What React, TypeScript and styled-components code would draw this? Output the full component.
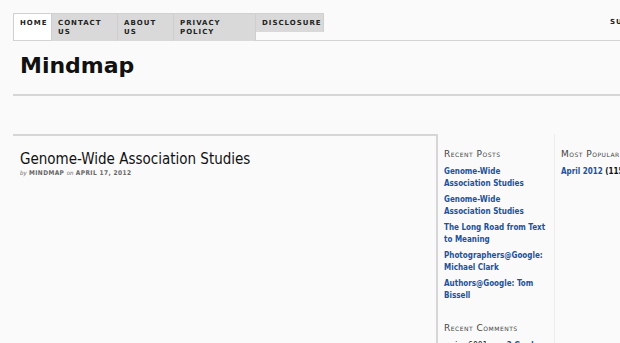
import React from 'react';
import styled, { createGlobalStyle } from 'styled-components';

const GlobalStyle = createGlobalStyle`
	html, body {
		margin: 0;
		padding: 0;
		background: #fafafa;
		overflow: hidden;
	}
	body {
		font-family: 'DejaVu Sans', 'Liberation Sans', sans-serif;
		color: #111;
	}
`;

const Page = styled.div`
	width: 1000px;
	padding: 13px 0 0 13px;
`;

const NavBar = styled.div`
	display: flex;
	align-items: flex-start;
	height: 27px;
	border-bottom: 1px solid #d4d4d4;
`;

const NavList = styled.ul`
	display: flex;
	align-items: flex-start;
	margin: 0;
	padding: 0;
	list-style-type: none;
	border-top: 1px solid #d0d0d0;
	border-left: 1px solid #d0d0d0;
`;

const NavItem = styled.li<{ $w: number; $active?: boolean }>`
	box-sizing: border-box;
	width: ${(p) => p.$w}px;
	height: ${(p) => (p.$active ? '26px' : 'auto')};
	padding: 5px 6px 4px;
	background: ${(p) => (p.$active ? '#fff' : '#d9d9d9')};
	border-right: 1px solid #cfcfcf;

	font-size: 7px;
	font-weight: bold;
	line-height: 9px;
	letter-spacing: 1px;
	text-transform: uppercase;
	color: #222;
`;

const Subscribe = styled.div`
	margin-left: 286px;
	padding-top: 5px;
	font-size: 7px;
	font-weight: bold;
	line-height: 9px;
	letter-spacing: 1px;
	color: #222;
`;

const Masthead = styled.div`
	height: 55px;
	border-bottom: 2px solid #d6d6d6;
	box-sizing: border-box;
	padding: 11px 0 0 7px;
`;

const SiteTitle = styled.h1`
	margin: 0;
	font-size: 22px;
	line-height: 28px;
	font-weight: bold;
	color: #111;
`;

const Main = styled.div`
	display: flex;
	margin-top: 38px;
`;

const Content = styled.div`
	width: 424px;
	box-sizing: border-box;
	min-height: 300px;
	padding: 13px 0 0 7px;
	border-top: 2px solid #d6d6d6;
	border-right: 1px solid #d6d6d6;
`;

const PostTitle = styled.h2`
	margin: 0;
	font-family: 'DejaVu Sans Condensed', 'DejaVu Sans', sans-serif;
	font-size: 15px;
	line-height: 20px;
	font-weight: normal;
	color: #111;
`;

const Meta = styled.div`
	font-family: 'DejaVu Sans Condensed', 'DejaVu Sans', sans-serif;
	font-size: 6.5px;
	font-weight: bold;
	letter-spacing: 0.4px;
	color: #666;

	em {
		font-weight: normal;
		font-size: 6px;
		letter-spacing: 0;
	}
`;

const SideCol = styled.div<{ $w: number; $line: string }>`
	width: ${(p) => p.$w}px;
	box-sizing: border-box;
	padding: 14px 6px 0 6px;
	border-left: 1px solid ${(p) => p.$line};
`;

const WidgetTitle = styled.h3<{ $top?: number }>`
	margin: ${(p) => p.$top || 0}px 0 6px;
	font-size: 9px;
	line-height: 12px;
	font-weight: normal;
	font-variant: small-caps;
	letter-spacing: 0.5px;
	color: #444;
	white-space: nowrap;
`;

const LinkList = styled.ul`
	margin: 0;
	padding: 0;
	list-style-type: none;
`;

const LinkItem = styled.li`
	margin-bottom: 4px;
	font-family: 'DejaVu Sans Condensed', 'DejaVu Sans', sans-serif;
	font-size: 8px;
	line-height: 12px;
	font-weight: bold;
	color: #21519c;
`;

const Count = styled.span`
	color: #111;
`;

const Comment = styled.div`
	font-family: 'DejaVu Sans Mono', monospace;
	font-size: 8px;
	line-height: 12px;
	color: #222;
	white-space: nowrap;

	span {
		font-family: 'DejaVu Sans Condensed', 'DejaVu Sans', sans-serif;
		font-weight: bold;
		color: #21519c;
	}
`;

const navItems = [
	{ label: 'Home', w: 38, active: true },
	{ label: 'Contact Us', w: 66 },
	{ label: 'About Us', w: 56 },
	{ label: 'Privacy Policy', w: 82 },
	{ label: 'Disclosure', w: 68 },
];

const recentPosts = [
	'Genome-Wide Association Studies',
	'Genome-Wide Association Studies',
	'The Long Road from Text to Meaning',
	'Photographers@Google: Michael Clark',
	'Authors@Google: Tom Bissell',
];

const App: React.FC = () => {
	return (
		<React.Fragment>
			<GlobalStyle />
			<Page>
				<NavBar>
					<NavList>
						{navItems.map((item, index) => (
							<NavItem key={index} $w={item.w} $active={item.active}>
								{item.label}
							</NavItem>
						))}
					</NavList>
					<Subscribe>SUBSCRIBE</Subscribe>
				</NavBar>
				<Masthead>
					<SiteTitle>Mindmap</SiteTitle>
				</Masthead>
				<Main>
					<Content>
						<PostTitle>Genome-Wide Association Studies</PostTitle>
						<Meta>
							<em>by</em> MINDMAP <em>on</em> APRIL 17, 2012
						</Meta>
					</Content>
					<SideCol $w={117} $line="#d6d6d6">
						<WidgetTitle>Recent Posts</WidgetTitle>
						<LinkList>
							{recentPosts.map((post, index) => (
								<LinkItem key={index}>{post}</LinkItem>
							))}
						</LinkList>
						<WidgetTitle $top={20}>Recent Comments</WidgetTitle>
						<Comment>
							srisa6001 on <span>3 Gordon</span>
						</Comment>
					</SideCol>
					<SideCol $w={200} $line="#ececec">
						<WidgetTitle>Most Popular</WidgetTitle>
						<LinkList>
							<LinkItem>
								April 2012 <Count>(115)</Count>
							</LinkItem>
						</LinkList>
					</SideCol>
				</Main>
			</Page>
		</React.Fragment>
	);
};

export default App;
